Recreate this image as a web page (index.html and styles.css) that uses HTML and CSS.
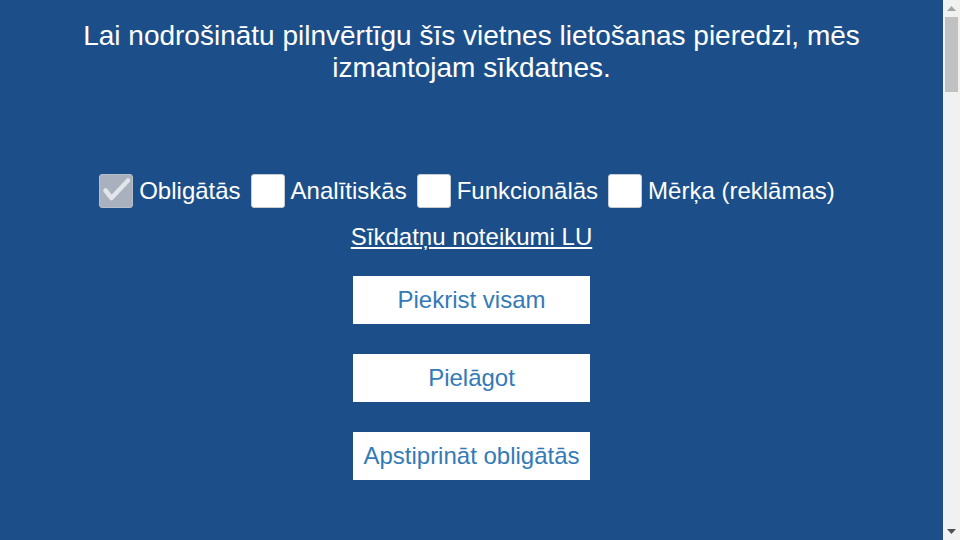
FILE: index.html
```
<!DOCTYPE html>
<html lang="lv">
	<head>
		<title>Sīkdatnes</title>
		<meta charset="utf-8" />
		<link rel="stylesheet" href="styles.css">
	</head>
	<body>
		<div class="page">
			<div id="cookies">
				<h2 class="cookie-title">Lai nodrošinātu pilnvērtīgu šīs vietnes lietošanas pieredzi, mēs izmantojam sīkdatnes.</h2>

				<div class="cookie-options">
					<label class="cookie-opt">
						<span class="box checked">
							<svg viewBox="0 0 34 34" width="34" height="34"><path d="M6.5 16.5 L12.5 24 L29 6.5" fill="none" stroke="#e2e5e9" stroke-width="4.5" stroke-linecap="round" stroke-linejoin="round"/></svg>
						</span>
						Obligātās
					</label>
					<label class="cookie-opt"><span class="box"></span>Analītiskās</label>
					<label class="cookie-opt"><span class="box"></span>Funkcionālās</label>
					<label class="cookie-opt"><span class="box"></span>Mērķa (reklāmas)</label>
				</div>

				<a class="cookie-link" href="#">Sīkdatņu noteikumi LU</a>

				<div class="cookie-buttons">
					<button>Piekrist visam</button>
					<button>Pielāgot</button>
					<button>Apstiprināt obligātās</button>
				</div>
			</div>
		</div>

		<!-- page scrollbar -->
		<div class="scrollbar">
			<div class="sb-btn">
				<svg width="9" height="5" viewBox="0 0 9 5"><path d="M0 5 L4.5 0 L9 5 Z" fill="#a3a3a3"/></svg>
			</div>
			<div class="sb-track"><div class="sb-thumb"></div></div>
			<div class="sb-btn">
				<svg width="9" height="5" viewBox="0 0 9 5"><path d="M0 0 L9 0 L4.5 5 Z" fill="#505050"/></svg>
			</div>
		</div>
	</body>
</html>
```
FILE: styles.css
```
body {
	margin: 0;
	height: 100vh;
	overflow: hidden;
	display: flex;
	background: #1c4f89;
	color: #fff;
	font-family: "Liberation Sans", Arial, sans-serif;
}

.page {
	flex: 1;
}

.scrollbar {
	width: 17px;
	display: flex;
	flex-direction: column;
	background: #f1f1f1;
}
.sb-btn {
	height: 17px;
	display: flex;
	align-items: center;
	justify-content: center;
}
.sb-btn svg {
	display: block;
}
.sb-track {
	flex: 1;
	padding: 0 2px;
}
.sb-thumb {
	height: 75px;
	background: #c1c1c1;
}

#cookies {
	display: flex;
	flex-direction: column;
	align-items: center;
	padding-top: 20px;
}

.cookie-title {
	margin: 0;
	width: 800px;
	font-size: 28px;
	font-weight: normal;
	line-height: 32px;
	text-align: center;
}

.cookie-options {
	display: flex;
	align-items: center;
	gap: 10px;
	margin-top: 90px;
	padding-right: 9px;
	font-size: 24px;
}

.cookie-opt {
	display: flex;
	align-items: center;
	gap: 6px;
}

.box {
	display: block;
	width: 34px;
	height: 34px;
	box-sizing: border-box;
	background: #fff;
	border: 1px solid #c9ccd1;
	border-radius: 3px;
}
.box.checked {
	background: #a8b1bd;
	border-color: #b7bec8;
}
.box svg {
	display: block;
	margin: -1px;
}

.cookie-link {
	margin-top: 14px;
	color: #fff;
	font-size: 24px;
	line-height: 30px;
}

.cookie-buttons {
	display: flex;
	flex-direction: column;
	gap: 30px;
	margin-top: 24px;
}
.cookie-buttons button {
	width: 237px;
	height: 48px;
	border: none;
	background: #fff;
	color: #337ab7;
	font-family: "Liberation Sans", Arial, sans-serif;
	font-size: 24px;
}
```
